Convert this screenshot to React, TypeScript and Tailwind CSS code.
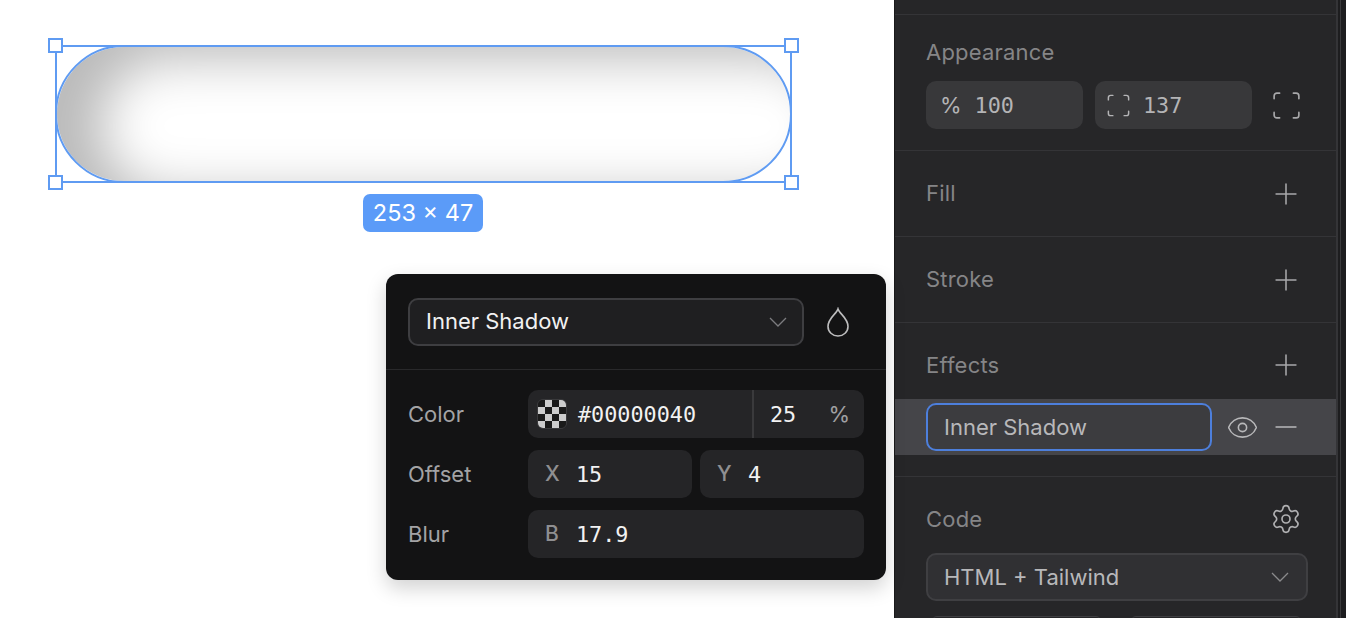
import { Eye, Minus, Plus, Scan, Settings } from "lucide-react";
import type { ReactNode } from "react";

const sans = "font-['Inter','Noto_Sans',sans-serif]";
const mono = "font-['DejaVu_Sans_Mono','Liberation_Mono',monospace] pt-[2px]";

function Chevron({ className }: { className: string }) {
  return (
    <svg viewBox="0 0 18 10" width="18" height="10" fill="none" className={className}>
      <path d="M1 1l8 8 8-8" stroke="currentColor" strokeWidth="1.3" />
    </svg>
  );
}

function Handle({ className }: { className: string }) {
  return <div className={`absolute w-[15px] h-[15px] bg-white border-2 border-[#5f9bf2] ${className}`} />;
}

function Field({ label, value, className = "" }: { label: string; value: string; className?: string }) {
  return (
    <div className={`h-12 rounded-[10px] bg-[#252527] flex items-center pl-[17px] ${className}`}>
      <span className={`${sans} text-[21px] font-medium text-[#8f8f91] w-[31px]`}>{label}</span>
      <span className={`${mono} text-[21.8px] text-[#f2f2f2]`}>{value}</span>
    </div>
  );
}

function PopRow({ label, children }: { label: string; children: ReactNode }) {
  return (
    <div className="flex items-center h-12">
      <span className={`${sans} text-[22px] text-[#a3a3a5] w-[120px]`}>{label}</span>
      <div className="flex flex-1 gap-2">{children}</div>
    </div>
  );
}

function AddIcon() {
  return <Plus size={34} strokeWidth={1.1} className="text-[#a8a8aa] shrink-0" />;
}

function Section({ title, children }: { title: string; children?: ReactNode }) {
  return (
    <div className="flex items-center justify-between h-[86px] pl-[31px] pr-[33px] border-b border-[#343437]">
      <span className={`${sans} text-[22px] tracking-[0.2px] text-[#858587]`}>{title}</span>
      {children}
    </div>
  );
}

function Checker() {
  const cells = Array.from({ length: 16 });
  return (
    <div className="grid grid-cols-4 w-[30px] h-[30px] rounded-md overflow-hidden border border-[#3a3a3c] shrink-0">
      {cells.map((_, i) => {
        const on = (i + Math.floor(i / 4)) % 2 === 0;
        return <div key={i} className={on ? "bg-[#1a1a1a]" : "bg-[#cccccc]"} />;
      })}
    </div>
  );
}

export default function App() {
  return (
    <div className={`${sans} flex w-[1346px] h-[618px] overflow-hidden bg-white`}>
      <main className="relative w-[894px] shrink-0 bg-white">
        {/* 選択中のシェイプ */}
        <div className="absolute left-[55px] top-[45px] w-[737px] h-[138px]">
          <div className="w-full h-full rounded-full border-2 border-[#5f9bf2] shadow-[inset_44px_12px_52px_rgba(0,0,0,0.27)]" />
          <div className="absolute inset-0 border-2 border-[#5f9bf2]" />
          <Handle className="-left-[7px] -top-[7px]" />
          <Handle className="-right-[7px] -top-[7px]" />
          <Handle className="-left-[7px] -bottom-[7px]" />
          <Handle className="-right-[7px] -bottom-[7px]" />
        </div>
        <div className="absolute left-[363px] top-[194px] w-[120px] h-[38px] rounded-[7px] bg-[#5b9bf8] flex items-center justify-center text-white text-[23.5px]">
          253 × 47
        </div>

        {/* エフェクトのポップオーバー */}
        <div className="absolute left-[386px] top-[274px] w-[500px] h-[306px] rounded-xl bg-[#131314] shadow-[0_8px_20px_rgba(0,0,0,0.18)]">
          <div className="flex items-center h-[96px] pl-[22px] pr-[36px] border-b border-[#29292b]">
            <div className="flex items-center justify-between w-[396px] h-12 rounded-[10px] bg-[#1f1f21] border-2 border-[#3e3e41] pl-4 pr-[15px]">
              <span className="text-[22px] text-[#f2f2f2]">Inner Shadow</span>
              <Chevron className="text-[#7c7c7f]" />
            </div>
            <svg viewBox="0 0 24 30" width="24" height="30" fill="none" className="ml-[22px] text-[#bdbdbe]">
              <path d="M12 2c1.500 5 10 9 10 17.500a10 9.500 0 0 1-20 0C2 11 10.500 7 12 2z" stroke="currentColor" strokeWidth="1.6" />
            </svg>
          </div>
          <div className="flex flex-col gap-3 pl-[22px] pr-[22px] pt-5">
            <PopRow label="Color">
              <div className="flex items-center w-full h-12 rounded-[10px] bg-[#252527]">
                <div className="flex items-center gap-[11px] pl-[9px] w-[226px] h-full border-r-2 border-[#3a3a3c] shrink-0">
                  <Checker />
                  <span className={`${mono} text-[21.8px] text-[#f2f2f2]`}>#00000040</span>
                </div>
                <div className="flex flex-1 items-center justify-between pl-4 pr-[14px]">
                  <span className={`${mono} text-[21.8px] text-[#f2f2f2]`}>25</span>
                  <span className="text-[22px] text-[#a0a0a2]">%</span>
                </div>
              </div>
            </PopRow>
            <PopRow label="Offset">
              <Field label="X" value="15" className="flex-1" />
              <Field label="Y" value="4" className="flex-1" />
            </PopRow>
            <PopRow label="Blur">
              <Field label="B" value="17.9" className="flex-1" />
            </PopRow>
          </div>
        </div>
      </main>

      {/* 右サイドバー */}
      <aside className="flex w-[452px] h-full bg-[#262628] border-l border-[#1a1a1b]">
        <div className="w-[443px] shrink-0 border-r-2 border-[#343437]">
          <div className="h-[15px] border-b border-[#343437]" />

          <div className="h-[136px] pt-[22px] pl-[31px] border-b border-[#343437]">
            <div className="text-[22px] tracking-[0.2px] leading-[30px] text-[#858587]">Appearance</div>
            <div className="flex items-center mt-[14px]">
              <div className="flex items-center w-[157px] h-12 shrink-0 rounded-[10px] bg-[#38383a] pl-[14px] text-[#b4b4b6] gap-[13px]">
                <span className="text-[22px]">%</span>
                <span className={`${mono} text-[21.8px]`}>100</span>
              </div>
              <div className="flex items-center w-[157px] h-12 shrink-0 ml-3 rounded-[10px] bg-[#38383a] pl-[10px] text-[#b4b4b6] gap-[11px]">
                <Scan size={27} strokeWidth={1.3} />
                <span className={`${mono} text-[21.8px]`}>137</span>
              </div>
              <Scan size={33} strokeWidth={1.2} className="ml-[18px] text-[#a8a8aa] shrink-0" />
            </div>
          </div>

          <Section title="Fill">
            <AddIcon />
          </Section>
          <Section title="Stroke">
            <AddIcon />
          </Section>

          <div className="h-[154px] border-b border-[#343437]">
            <div className="flex items-center justify-between h-[76px] pt-2 pl-[31px] pr-[33px]">
              <span className="text-[22px] tracking-[0.2px] text-[#858587]">Effects</span>
              <AddIcon />
            </div>
            <div className="flex items-center h-[56px] bg-[#454549] pl-[31px]">
              <div className="flex items-center w-[286px] h-12 shrink-0 rounded-[10px] bg-[#3c3c3f] border-2 border-[#4d7fdc] pl-4 text-[22px] text-[#b8b8ba]">
                Inner Shadow
              </div>
              <Eye size={33} strokeWidth={1.15} className="ml-[14px] text-[#b8b8ba] shrink-0" />
              <Minus size={34} strokeWidth={1.1} className="ml-[10px] text-[#b8b8ba] shrink-0" />
            </div>
          </div>

          <div className="pl-[31px] pr-[28px] pt-[26px]">
            <div className="flex items-center justify-between h-8 pr-[6px]">
              <span className="text-[22px] tracking-[0.2px] text-[#858587]">Code</span>
              <Settings size={32} strokeWidth={1.25} className="text-[#b0b0b2]" />
            </div>
            <div className="flex items-center justify-between h-12 mt-[18px] rounded-[10px] bg-[#303033] border-2 border-[#3f3f42] pl-4 pr-[17px]">
              <span className="text-[22px] text-[#b8b8ba]">HTML + Tailwind</span>
              <Chevron className="text-[#8a8a8c]" />
            </div>
            <div className="flex gap-8 ml-[7px] mt-[15px]">
              <div className="w-[167px] h-1 rounded-t-sm border-t border-[#3f3f42]" />
              <div className="w-[168px] h-1 rounded-t-sm border-t border-[#3f3f42]" />
            </div>
          </div>
        </div>
        <div className="flex-1 pl-[2px] bg-[#1d1d1f]">
          <div className="h-full border-l border-[#3a3a3c]" />
        </div>
      </aside>
    </div>
  );
}
